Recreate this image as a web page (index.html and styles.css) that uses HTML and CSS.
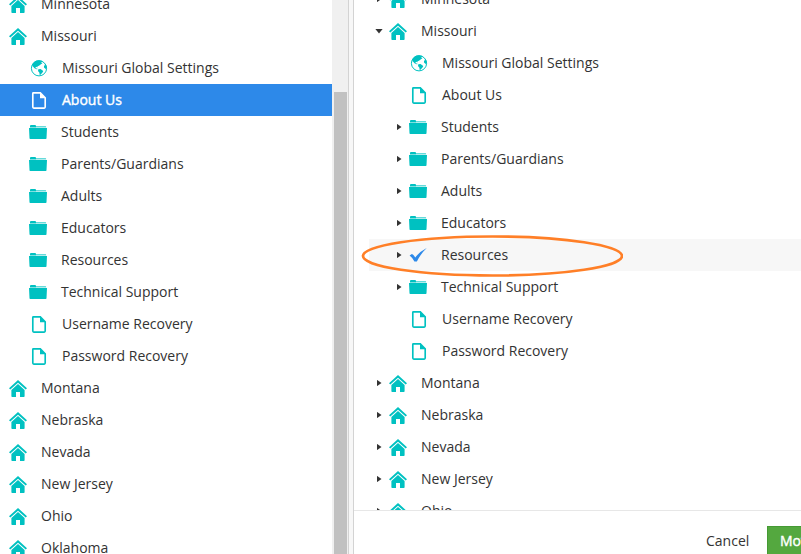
FILE: index.html
```html
<!DOCTYPE html>
<html lang="en">
<head>
<meta charset="utf-8">
<title>Move page</title>
<link rel="stylesheet" href="styles.css">
</head>
<body>
<svg class="sprite" aria-hidden="true">
  <symbol id="home" viewBox="0 0 18 18"><path d="M9 0 18 8.200 16.700 9.600 9 2.700 1.300 9.600 0 8.200Z"/><path d="M9 3.900 15.600 9.900V16.200Q15.600 17 14.800 17H11V12H7V17H3.200Q2.400 17 2.400 16.200V9.900Z"/></symbol>
  <symbol id="globe" viewBox="0 0.700 18 18"><circle cx="9" cy="9" r="7.600" fill="none" stroke="currentColor" stroke-width="1"/><path d="M2 5.400Q4.500 1 9 1L12.600 1.700 12 2.800 10.600 2.500 12.400 4 10.600 5.200 9 6.500 7.600 7 7.300 8.200 6.500 7.500 5.300 8.200 6.500 9.200 8 9.700 6.700 10 4.500 9 2.500 6.600Z"/><path d="M8.300 10 10.500 9.800 13.300 11.600 12.500 13.300 10.700 15.200 9.700 16 9.400 13.500 8 11.700Z"/><path d="M14.200 4.200 16.600 6.800 16.800 9 15.700 9.600 14 8.200 14 6.500 15.200 5.700Z"/></symbol>
  <symbol id="file" viewBox="0 0 18 18"><path d="M3.300 .9H10.300L15.200 5.800V15.100Q15.200 16.100 14.200 16.100H3.800Q2.800 16.100 2.800 15.100V1.400Q2.800 .9 3.300 .9Z" fill="none" stroke="currentColor" stroke-width="1.650"/><path d="M10 .6 15.600 6.200H10Z"/></symbol>
  <symbol id="folder" viewBox="0 0 18 18"><path d="M1 3.400V2Q1 1 2 1H6Q7 1 7 2V3.400Z"/><path d="M7 2H16.500Q17.200 2 17.200 3.400H7Z" opacity=".6"/><path d="M0 4.100H18L17.500 14.200Q17.500 15 16.700 15H1.300Q.5 15 .5 14.200Z"/></symbol>
  <symbol id="check" viewBox="0 0 18 18"><path d="M.6 8.600 2.900 7.100Q4.700 7.800 6.300 10.400Q10.500 4.600 17.700 .9Q11.500 6.900 7.900 14.600H5.400Q3.600 10.800 .6 8.600Z"/></symbol>
</svg>
<div class="layout">
  <div class="panel left">
    <ul class="tree">
      <li><svg class="icon"><use href="#home"/></svg><span>Minnesota</span></li>
      <li><svg class="icon"><use href="#home"/></svg><span>Missouri</span></li>
      <li class="child page"><svg class="icon"><use href="#globe"/></svg><span>Missouri Global Settings</span></li>
      <li class="child page selected"><svg class="icon"><use href="#file"/></svg><span>About Us</span></li>
      <li class="child"><svg class="icon"><use href="#folder"/></svg><span>Students</span></li>
      <li class="child"><svg class="icon"><use href="#folder"/></svg><span>Parents/Guardians</span></li>
      <li class="child"><svg class="icon"><use href="#folder"/></svg><span>Adults</span></li>
      <li class="child"><svg class="icon"><use href="#folder"/></svg><span>Educators</span></li>
      <li class="child"><svg class="icon"><use href="#folder"/></svg><span>Resources</span></li>
      <li class="child"><svg class="icon"><use href="#folder"/></svg><span>Technical Support</span></li>
      <li class="child page"><svg class="icon"><use href="#file"/></svg><span>Username Recovery</span></li>
      <li class="child page"><svg class="icon"><use href="#file"/></svg><span>Password Recovery</span></li>
      <li><svg class="icon"><use href="#home"/></svg><span>Montana</span></li>
      <li><svg class="icon"><use href="#home"/></svg><span>Nebraska</span></li>
      <li><svg class="icon"><use href="#home"/></svg><span>Nevada</span></li>
      <li><svg class="icon"><use href="#home"/></svg><span>New Jersey</span></li>
      <li><svg class="icon"><use href="#home"/></svg><span>Ohio</span></li>
      <li><svg class="icon"><use href="#home"/></svg><span>Oklahoma</span></li>
    </ul>
  </div>
  <div class="scrollbar"><div class="thumb"></div></div>
  <div class="splitter"></div>
  <div class="dialog">
    <div class="panel right">
      <ul class="tree">
        <li><i class="arrow"></i><svg class="icon"><use href="#home"/></svg><span>Minnesota</span></li>
        <li><i class="arrow open"></i><svg class="icon"><use href="#home"/></svg><span>Missouri</span></li>
        <li class="child page"><i class="arrow none"></i><svg class="icon"><use href="#globe"/></svg><span>Missouri Global Settings</span></li>
        <li class="child page"><i class="arrow none"></i><svg class="icon"><use href="#file"/></svg><span>About Us</span></li>
        <li class="child"><i class="arrow"></i><svg class="icon"><use href="#folder"/></svg><span>Students</span></li>
        <li class="child"><i class="arrow"></i><svg class="icon"><use href="#folder"/></svg><span>Parents/Guardians</span></li>
        <li class="child"><i class="arrow"></i><svg class="icon"><use href="#folder"/></svg><span>Adults</span></li>
        <li class="child"><i class="arrow"></i><svg class="icon"><use href="#folder"/></svg><span>Educators</span></li>
        <li class="child target"><i class="arrow"></i><svg class="icon check"><use href="#check"/></svg><span>Resources</span>
          <svg class="ring" viewBox="0 0 262 42"><ellipse cx="131.500" cy="21" rx="129.500" ry="19.500"/></svg></li>
        <li class="child"><i class="arrow"></i><svg class="icon"><use href="#folder"/></svg><span>Technical Support</span></li>
        <li class="child page"><i class="arrow none"></i><svg class="icon"><use href="#file"/></svg><span>Username Recovery</span></li>
        <li class="child page"><i class="arrow none"></i><svg class="icon"><use href="#file"/></svg><span>Password Recovery</span></li>
        <li><i class="arrow"></i><svg class="icon"><use href="#home"/></svg><span>Montana</span></li>
        <li><i class="arrow"></i><svg class="icon"><use href="#home"/></svg><span>Nebraska</span></li>
        <li><i class="arrow"></i><svg class="icon"><use href="#home"/></svg><span>Nevada</span></li>
        <li><i class="arrow"></i><svg class="icon"><use href="#home"/></svg><span>New Jersey</span></li>
        <li><i class="arrow"></i><svg class="icon"><use href="#home"/></svg><span>Ohio</span></li>
      </ul>
    </div>
    <div class="footer">
      <span class="cancel">Cancel</span>
      <span class="move">Move</span>
    </div>
  </div>
</div>
</body>
</html>
```
FILE: styles.css
```css
* { box-sizing: border-box; }
body {
  margin: 0;
  overflow: hidden;
  background: #fff;
  color: #333;
  font: 14px/32px "Open Sans", sans-serif;
}
.sprite { display: none; }
.layout { display: flex; height: 554px; overflow: hidden; }
.panel { overflow: hidden; }
.left { flex: 0 0 332px; }
.tree { list-style: none; margin: 0; padding: 0; }
.left .tree { margin-top: -12px; }
.right .tree { margin: -17px 0 0 15px; }
.tree li {
  display: flex;
  align-items: flex-start;
  height: 32px;
  padding-left: 9px;
  white-space: nowrap;
}
.tree li.child { padding-left: 29px; }
.icon {
  flex: none;
  width: 18px;
  height: 18px;
  margin: 8px 14px 0 0;
  color: #00c1c1;
  fill: currentColor;
}
.page .icon { margin-left: 1px; }
.tree li.selected { background: #2d89e9; color: #fff; -webkit-text-stroke: .4px #fff; }
.selected .icon { color: #fff; }
.scrollbar { flex: 0 0 16px; padding: 92px 1px 0 2px; background: #f0f0f0; }
.thumb { height: 100%; background: #c1c1c1; }
.splitter {
  flex: 0 0 6px;
  border: 1px solid #d3d3d3;
  border-width: 0 1px;
  background: #f7f7f7;
}
.dialog { flex: 1; min-width: 0; display: flex; flex-direction: column; }
.right { height: 510px; flex: none; }
.right .tree li { padding-left: 5px; }
.right .tree li.child { padding-left: 25px; }
.arrow { flex: 0 0 15px; height: 32px; display: flex; align-items: center; }
.arrow::before {
  content: "";
  width: 5px;
  height: 7px;
  margin: 0 0 0 2.5px;
  background: #333;
  clip-path: polygon(0 0, 100% 50%, 0 100%);
}
.arrow.open::before { width: 8px; height: 5px; margin-left: 1px; clip-path: polygon(0 0, 100% 0, 50% 100%); }
.arrow.none::before { display: none; }
.right .tree .target { position: relative; background: #f7f7f7; }
.icon.check { color: #2d89e9; }
.ring {
  position: absolute;
  left: -8px;
  top: -4px;
  width: 262px;
  height: 42px;
  fill: none;
  stroke: #ff7f27;
  stroke-width: 2.7;
}
.footer {
  flex: 1;
  display: flex;
  justify-content: flex-start;
  padding: 15px 0 0 352px;
  border-top: 1px solid #e7e7e7;
}
.cancel { flex: 0 0 61px; line-height: 30px; }
.move {
  flex: 0 0 72px;
  height: 32px;
  padding-left: 12px;
  border: 1px solid #459a34;
  background: #54a83f;
  color: #fff;
  line-height: 28px;
  -webkit-text-stroke: .4px #fff;
}
```
